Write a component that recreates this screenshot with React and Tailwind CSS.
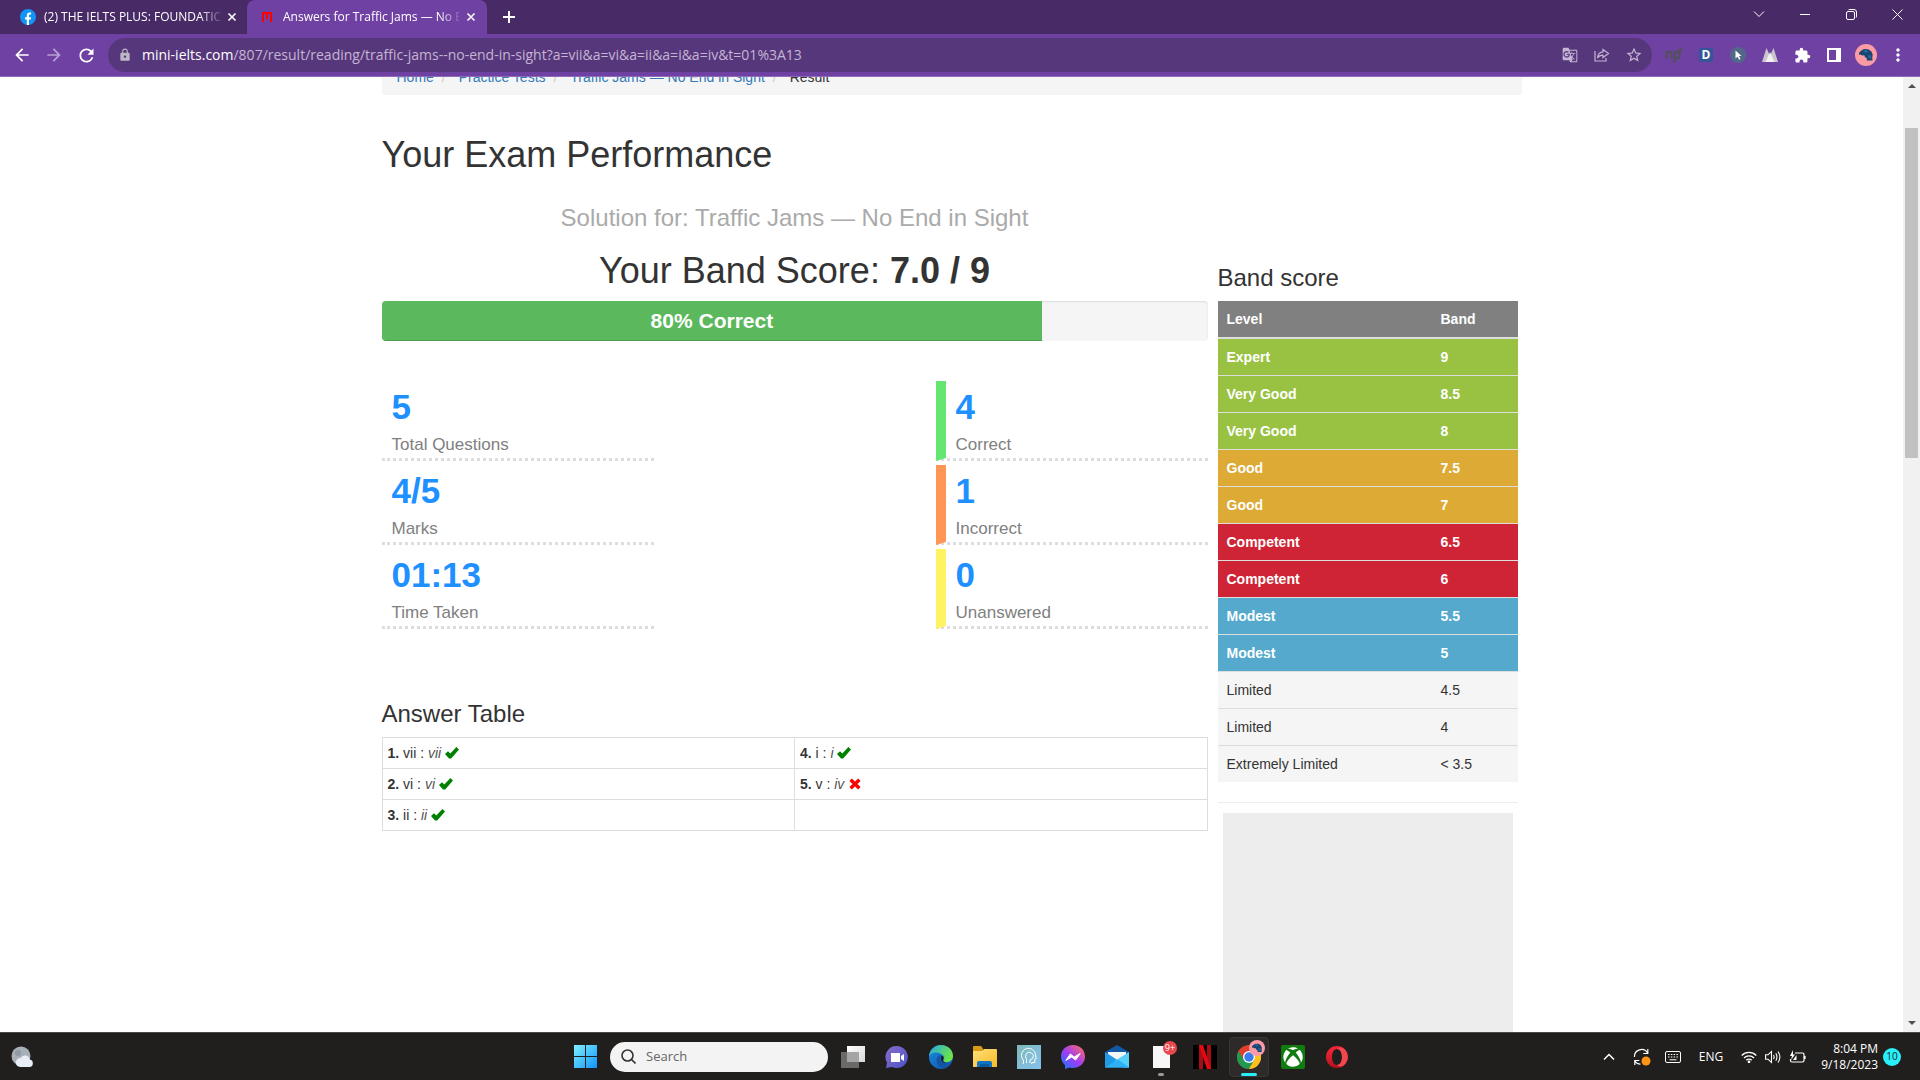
import React from "react";
import {
  MdArrowBack,
  MdArrowForward,
  MdRefresh,
  MdLock,
  MdGTranslate,
  MdStarBorder,
  MdExtension,
  MdMoreVert,
} from "react-icons/md";
import { FaXbox } from "react-icons/fa";

const bands = [
  ["Expert", "9", "bg-[#99c243] font-bold text-white"],
  ["Very Good", "8.5", "bg-[#99c243] font-bold text-white"],
  ["Very Good", "8", "bg-[#99c243] font-bold text-white"],
  ["Good", "7.5", "bg-[#dcaa35] font-bold text-white"],
  ["Good", "7", "bg-[#dcaa35] font-bold text-white"],
  ["Competent", "6.5", "bg-[#cf2435] font-bold text-white"],
  ["Competent", "6", "bg-[#cf2435] font-bold text-white"],
  ["Modest", "5.5", "bg-[#54a9cd] font-bold text-white"],
  ["Modest", "5", "bg-[#54a9cd] font-bold text-white"],
  ["Limited", "4.5", "bg-[#f5f5f5]"],
  ["Limited", "4", "bg-[#f5f5f5]"],
  ["Extremely Limited", "< 3.5", "bg-[#f5f5f5]"],
];

const answers = [
  [
    { n: 1, key: "vii", given: "vii", ok: true },
    { n: 4, key: "i", given: "i", ok: true },
  ],
  [
    { n: 2, key: "vi", given: "vi", ok: true },
    { n: 5, key: "v", given: "iv", ok: false },
  ],
  [{ n: 3, key: "ii", given: "ii", ok: true }, null],
];

function CloseX({ className }) {
  return (
    <svg viewBox="0 0 10 10" className={className} fill="none" stroke="currentColor" strokeWidth="1.6">
      <path d="M1.5 1.5l7 7M8.5 1.5l-7 7" />
    </svg>
  );
}

/* Blue creature used as the profile picture */
function Avatar({ className }) {
  return (
    <svg viewBox="0 0 22 22" className={className}>
      <circle cx="11" cy="11" r="11" fill="#fc9ba5" />
      <path
        d="M4.200 8.500 6.500 6.500 9 5l4 .2 3.200 2 1.500 3.300-.4 3 .2 3h-5.800l.2-2.200-2-1.300-.6-1.800-2.300.2-1.500-1-1.600.4z"
        fill="#17466f"
      />
      <path d="M8 7l3-1 2 1.500-2 1.500zM12.500 12l2.500-1 1.500 2-1 2z" fill="#2a6aa0" />
    </svg>
  );
}

function FacebookIcon() {
  return (
    <svg viewBox="0 0 16 16" className="size-4 shrink-0">
      <circle cx="8" cy="8" r="8" fill="#1194f5" />
      <path
        d="M6.800 16v-5.400H5V8.300h1.800V6.700c0-2 1.100-3.100 2.900-3.100.7 0 1.400.1 1.400.1v1.800h-.9c-.9 0-1.200.5-1.200 1.200v1.600h2.100l-.4 2.300H9V16z"
        fill="#fff"
      />
    </svg>
  );
}

function TabStrip() {
  return (
    <div className="flex h-[34px] shrink-0 items-stretch bg-[#472a66] text-xs text-white">
      <div className="flex w-[247px] items-center pl-5">
        <FacebookIcon />
        <span className="ml-2 w-[176px] overflow-hidden whitespace-nowrap [mask-image:linear-gradient(to_right,black_156px,transparent_180px)]">
          (2) THE IELTS PLUS: FOUNDATION
        </span>
        <button type="button" aria-label="Close tab" className="ml-[7px]">
          <CloseX className="size-2.5" />
        </button>
      </div>
      <div className="flex w-[240px] items-center rounded-t-lg bg-[#6f41a3] pl-[15px]">
        <svg viewBox="0 0 10 10" className="size-2.5 shrink-0" fill="#f00">
          <path d="M0 0h10v10H8V2H6v5H4V2H2v8H0z" />
        </svg>
        <span className="ml-[11px] w-[176px] overflow-hidden whitespace-nowrap [mask-image:linear-gradient(to_right,black_156px,transparent_180px)]">
          Answers for Traffic Jams — No En
        </span>
        <button type="button" aria-label="Close tab" className="ml-[7px]">
          <CloseX className="size-2.5" />
        </button>
      </div>
      <button type="button" aria-label="New tab" className="flex w-11 items-center justify-center">
        <svg viewBox="0 0 12 12" className="size-3" stroke="currentColor" strokeWidth="2">
          <path d="M6 0v12M0 6h12" />
        </svg>
      </button>
      <div className="ml-auto flex h-7 items-center">
        <button type="button" aria-label="Search tabs" className="flex w-[46px] justify-center">
          <svg viewBox="0 0 12 8" className="h-2 w-3" fill="none" stroke="currentColor">
            <path d="M1 1.500l5 5 5-5" />
          </svg>
        </button>
        <button type="button" aria-label="Minimize" className="flex w-[46px] justify-center">
          <span className="h-px w-2.5 bg-white" />
        </button>
        <button type="button" aria-label="Restore" className="flex w-[46px] justify-center">
          <svg viewBox="0 0 11 11" className="size-[11px]" fill="none" stroke="currentColor">
            <rect x=".5" y="2.500" width="8" height="8" rx="1.500" />
            <path d="M2.500.8Q3 .5 4 .5h4q2.500 0 2.500 2.500v4q0 1-.3 1.500" />
          </svg>
        </button>
        <button type="button" aria-label="Close" className="flex w-[46px] justify-center">
          <svg viewBox="0 0 11 11" className="size-[11px]" fill="none" stroke="currentColor">
            <path d="M.5.5l10 10M10.500.5l-10 10" />
          </svg>
        </button>
      </div>
    </div>
  );
}

function ToolButton({ label, children }) {
  return (
    <button type="button" aria-label={label} className="flex size-8 items-center justify-center">
      {children}
    </button>
  );
}

function Toolbar() {
  return (
    <div className="flex h-[43px] shrink-0 items-center border-b border-[#8f6ab8] bg-[#6f41a3] pl-1.5 pr-1.5 text-white">
      <ToolButton label="Back"><MdArrowBack className="size-5" /></ToolButton>
      <ToolButton label="Forward"><MdArrowForward className="size-5 opacity-50" /></ToolButton>
      <ToolButton label="Reload"><MdRefresh className="size-[21px]" /></ToolButton>
      <div className="ml-1.5 flex h-[34px] flex-1 items-center rounded-full bg-[#57377b] pl-2.5 pr-0.5 text-[#c4b5d4]">
        <MdLock className="size-3.5 text-[#bdb6c4]" />
        <div className="ml-2.5 flex-1 text-sm whitespace-nowrap">
          <span className="text-white">mini-ielts.com</span>
          /807/result/reading/traffic-jams--no-end-in-sight?a=vii&amp;a=vi&amp;a=ii&amp;a=i&amp;a=iv&amp;t=01%3A13
        </div>
        <ToolButton label="Translate"><MdGTranslate className="size-4" /></ToolButton>
        <ToolButton label="Share">
          <svg viewBox="0 0 16 14" className="h-3.5 w-4" fill="none" stroke="currentColor" strokeWidth="1.200">
            <path d="M1 3v10h11v-3M9 1.500L14.500 5.500 9 9.500V7.200Q5.500 7 3.500 10 4 4.200 9 3.800z" />
          </svg>
        </ToolButton>
        <ToolButton label="Bookmark"><MdStarBorder className="size-[18px]" /></ToolButton>
      </div>
      <div className="ml-1.5 flex">
        <ToolButton label="np extension">
          <svg viewBox="0 0 18 16" className="h-4 w-[18px]" fill="none" stroke="#544f5c" strokeWidth="2.200">
            <path d="M1.500 12V4M1.500 6.500Q2 4.500 4 4.500T6.500 7v5M9.500 16V4M9.500 8q0-3.500 2.500-3.500T14.500 8 12 11.500 9.500 8" />
            <path d="M15.500 0v6M12.500 3h6" strokeWidth="1.500" />
          </svg>
        </ToolButton>
        <ToolButton label="Dictionary">
          <span className="flex size-3.5 items-center justify-center rounded-xs bg-[#335699] text-xs font-bold">D</span>
        </ToolButton>
        <ToolButton label="Cursor">
          <svg viewBox="0 0 16 16" className="size-4">
            <circle cx="8" cy="8" r="8" fill="#526889" />
            <path d="M5.500 3.500l6 5.500H9l1.500 3-1.400.7-1.500-3-2.100 1.900z" fill="#fff" />
          </svg>
        </ToolButton>
        <ToolButton label="Peaks">
          <svg viewBox="0 0 16 14" className="h-3.5 w-4">
            <path d="M0 14L4.500 0 8 8 11.500 0 16 14z" fill="#c9c6cc" />
            <path d="M3.500 14L8 4l4.500 10z" fill="#f2f0f3" />
          </svg>
        </ToolButton>
        <ToolButton label="Extensions"><MdExtension className="size-[17px]" /></ToolButton>
        <ToolButton label="Side panel">
          <svg viewBox="0 0 14 14" className="size-3.5" fill="#fff">
            <path fillRule="evenodd" d="M0 0h14v14H0zM2 2v10h7V2z" />
          </svg>
        </ToolButton>
        <ToolButton label="Profile"><Avatar className="size-[22px]" /></ToolButton>
        <ToolButton label="Menu"><MdMoreVert className="size-5" /></ToolButton>
      </div>
    </div>
  );
}

function Stat({ value, label, edge = "" }) {
  return (
    <div className={"border-b-[3px] border-dotted border-b-[#ddd] pt-px pl-2.5 " + edge}>
      <div className="text-[35px] leading-[50px] font-bold text-[#1e90ff]">{value}</div>
      <div className="text-[17px] leading-[26px] text-[#808080]">{label}</div>
    </div>
  );
}

function Answer({ item }) {
  if (!item) return null;
  return (
    <>
      <b>{item.n}.</b> {item.key} : <i className="text-[#555]">{item.given}</i>{" "}
      {item.ok ? (
        <svg viewBox="0 0 14 12" className="inline h-3 w-3.5 align-[-1px]" fill="#008000">
          <path d="M0 7l3-2.700 2.300 2.200L11.400 0 14 2.600 6.200 11.500H4z" />
        </svg>
      ) : (
        <svg viewBox="0 0 12 12" className="ml-px inline size-3 align-[-1px]" fill="#f00">
          <path d="M2.800.5L6 3.600 9.200.5 11.600 2.900 8.500 6l3.100 3.100-2.400 2.400L6 8.400 2.800 11.500.4 9.100 3.500 6 .4 2.900z" />
        </svg>
      )}
    </>
  );
}

function BandTable() {
  return (
    <table className="w-full table-fixed border-collapse text-left">
      <colgroup>
        <col />
        <col className="w-[86px]" />
      </colgroup>
      <thead>
        <tr className="bg-[#808080] text-white">
          <th className="px-[9px] py-2">Level</th>
          <th className="px-[9px] py-2">Band</th>
        </tr>
      </thead>
      <tbody>
        {bands.map(([level, band, tone], i) => (
          <tr key={i} className={(i === 0 ? "border-t-2 " : "border-t ") + "border-[#ddd] " + tone}>
            <td className="px-[9px] py-2">{level}</td>
            <td className="px-[9px] py-2">{band}</td>
          </tr>
        ))}
      </tbody>
    </table>
  );
}

function Crumb({ href, children }) {
  return (
    <>
      <a href={href} className="text-[#337ab7]">{children}</a>
      <span className="pl-2 pr-[9px] text-[#ccc]">/&nbsp;</span>
    </>
  );
}

function ResultPage() {
  return (
    <main className="flex-1 overflow-hidden bg-white font-['Liberation_Sans',Arial,sans-serif] text-sm text-[#333]">
      <div className="mx-auto -mt-[18px] max-w-[1140px]">
        <nav className="flex rounded-b bg-[#f5f5f5] px-[15px] py-2" aria-label="Breadcrumb">
          <Crumb href="#home">Home</Crumb>
          <Crumb href="#tests">Practice Tests</Crumb>
          <Crumb href="#jams">Traffic Jams — No End in Sight</Crumb>
          <span>Result</span>
        </nav>
        <h1 className="mt-10 text-4xl leading-10">Your Exam Performance</h1>
        <div className="mt-[30px] flex gap-2.5 pr-1">
          <section className="flex-1">
            <h2 className="text-center text-2xl leading-[26px] text-[#aaa]">
              Solution for: Traffic Jams — No End in Sight
            </h2>
            <h2 className="mt-5 text-center text-4xl leading-10">
              Your Band Score: <b>7.0 / 9</b>
            </h2>
            <div className="mt-2.5 h-10 overflow-hidden rounded bg-[#f5f5f5] shadow-[inset_0_1px_2px_rgba(0,0,0,0.1)]">
              <div className="h-full w-4/5 bg-[#5cb85c] text-center text-[21px] leading-10 font-bold text-white shadow-[inset_0_-1px_0_rgba(0,0,0,0.15)]">
                80% Correct
              </div>
            </div>
            <div className="mt-10 flex justify-between">
              <div className="flex w-[272px] flex-col gap-1">
                <Stat value="5" label="Total Questions" />
                <Stat value="4/5" label="Marks" />
                <Stat value="01:13" label="Time Taken" />
              </div>
              <div className="flex w-[272px] flex-col gap-1">
                <Stat value="4" label="Correct" edge="border-l-[10px] [border-left-style:solid] border-l-[#65e572]" />
                <Stat value="1" label="Incorrect" edge="border-l-[10px] [border-left-style:solid] border-l-[#ff9655]" />
                <Stat value="0" label="Unanswered" edge="border-l-[10px] [border-left-style:solid] border-l-[#fff263]" />
              </div>
            </div>
            <h3 className="mt-[72px] text-2xl leading-[26px]">Answer Table</h3>
            <table className="mt-2.5 w-full table-fixed border-collapse">
              <tbody>
                {answers.map((row, i) => (
                  <tr key={i}>
                    {row.map((item, j) => (
                      <td key={j} className="h-[31px] border border-[#ddd] px-[5px] align-middle">
                        <Answer item={item} />
                      </td>
                    ))}
                  </tr>
                ))}
              </tbody>
            </table>
          </section>
          <aside className="w-[300px] shrink-0 pt-[60px]">
            <h3 className="mb-2.5 text-2xl leading-[26px]">Band score</h3>
            <BandTable />
            <hr className="mt-5 mb-2.5 border-[#eee]" />
            <div className="mx-[5px] h-[600px] bg-[#ededed]" />
          </aside>
        </div>
      </div>
    </main>
  );
}

function Scrollbar() {
  return (
    <div className="flex w-[17px] shrink-0 flex-col items-center bg-[#f1f1f1] py-[7px]">
      <span className="border-x-4 border-b-4 border-x-transparent border-b-[#505050]" />
      <span className="mt-10 h-[330px] w-[13px] bg-[#c1c1c1]" />
      <span className="mt-auto border-x-4 border-t-4 border-x-transparent border-t-[#505050]" />
    </div>
  );
}

function AppButton({ label, children }) {
  return (
    <button type="button" aria-label={label} className="relative flex size-6 items-center justify-center">
      {children}
    </button>
  );
}

function Gradient({ id, from, to, x2 = "1", y2 = "1" }) {
  return (
    <linearGradient id={id} x1="0" y1="0" x2={x2} y2={y2}>
      <stop offset="0" stopColor={from} />
      <stop offset="1" stopColor={to} />
    </linearGradient>
  );
}

function Taskbar() {
  return (
    <footer className="grid h-12 shrink-0 grid-cols-[1fr_auto_1fr] items-center border-t border-[#484848] bg-[#211f1e] text-white">
      <button type="button" aria-label="Weather" className="ml-2.5 w-fit">
        <svg viewBox="0 0 24 22" className="h-[22px] w-6">
          <circle cx="11" cy="10" r="9.500" fill="#a7afb7" />
          <circle cx="8" cy="7" r="3" fill="#8f99a3" />
          <path d="M10 21a4.500 4.500 0 0 1 .5-9 5 5 0 0 1 9.300 1.500A3.800 3.800 0 0 1 19.500 21z" fill="#e8eef5" />
        </svg>
      </button>

      <div className="flex items-center gap-5 pl-0.5">
        <AppButton label="Start">
          <svg viewBox="0 0 23 23" className="size-[23px]">
            <defs><Gradient id="win" from="#80f2ff" to="#0f93fb" /></defs>
            <path d="M0 0h11v11H0zM12 0h11v11H12zM0 12h11v11H0zM12 12h11v11H12z" fill="url(#win)" />
          </svg>
        </AppButton>
        <label className="-mr-[7px] -ml-[7px] flex h-[30px] w-[218px] items-center rounded-full bg-[#f3f3f3] pl-[11px]">
          <svg viewBox="0 0 15 15" className="size-[15px]" fill="none" stroke="#333" strokeWidth="1.600">
            <circle cx="6.500" cy="6.500" r="5.500" />
            <path d="M10.500 10.500l4 4" />
          </svg>
          <input
            aria-label="Search"
            placeholder="Search"
            className="ml-2.5 w-40 bg-transparent text-[13px] text-[#333] outline-none placeholder:text-[#666]"
          />
        </label>
        <AppButton label="Task view">
          <svg viewBox="0 0 24 22" className="h-[22px] w-6">
            <defs><Gradient id="tv" from="#fff" to="#d8d8d8" /></defs>
            <path d="M6 0h18v16H6z" fill="url(#tv)" />
            <path d="M0 6h18v16H0z" fill="#6a6a6a" />
            <path d="M6 6h12v10H6z" fill="#a5a5a5" />
          </svg>
        </AppButton>
        <AppButton label="Chat">
          <svg viewBox="0 0 24 24" className="size-6">
            <defs><Gradient id="chat" from="#8b6cc8" to="#4a55cc" /></defs>
            <path d="M12 1a11 11 0 1 1-5 20.900L1 23l1-5.500A11 11 0 0 1 12 1z" fill="url(#chat)" />
            <path d="M6 8h9v9H6zM16 11l3-2v7l-3-2z" fill="#fff" />
          </svg>
        </AppButton>
        <AppButton label="Edge">
          <svg viewBox="0 0 24 24" className="size-6">
            <defs>
              <Gradient id="edgeTop" from="#23a8e8" to="#6be24a" y2="0.4" />
              <Gradient id="edgeLow" from="#1b8fdf" to="#0c4fa8" />
            </defs>
            <circle cx="12" cy="12" r="12" fill="url(#edgeLow)" />
            <path d="M0 11.500C.5 4.500 6 0 12 0c7 0 12 5 12 11 0 4-3 6.200-6.200 6.200-2.800 0-4-1.200-3.300-2.200 1-1.200 1-3-.3-4.500C10 6 2.500 6.500 0 11.500z" fill="url(#edgeTop)" />
            <path d="M10 10.500c-3.200 2-3.500 8 1.500 11.500 3.500 2 8 .5 10.500-3.500-5 2.300-10.500 0-11-4-.1-1.800.4-3 .5-4z" fill="#1553a5" />
            <path d="M12.500 10.500c2 .5 2.500 2.800 1.500 4.500-.5 1.500 1.500 3 4 3-4.500 1.500-7.500-3.500-5.500-7.500z" fill="#211f1e" />
          </svg>
        </AppButton>
        <AppButton label="File Explorer">
          <svg viewBox="0 0 24 22" className="h-[22px] w-6">
            <defs><Gradient id="fold" from="#ffe07a" to="#f7b928" /></defs>
            <path d="M0 1q0-1 1-1h7l2 2.500V6H0z" fill="#d99a14" />
            <path d="M0 5h9l2-2h12q1 0 1 1v17H0z" fill="url(#fold)" />
            <path d="M4 21v-4q0-2 2-2h11q2 0 2 2v4z" fill="#1272c4" />
            <path d="M7 18h9v3H7z" fill="#0d5a9f" />
          </svg>
        </AppButton>
        <AppButton label="Mind app">
          <svg viewBox="0 0 24 24" className="size-6" fill="none" stroke="#fff">
            <defs><Gradient id="mind" from="#7fb9b8" to="#85c0ee" /></defs>
            <path d="M0 0h24v24H0z" fill="url(#mind)" stroke="none" />
            <path d="M6 19q1-2 .3-4A7 7 0 1 1 18.500 10l.8 3.500-1.500.5v3.500h-3V19" />
            <path d="M9.500 18v-3.500Q7.500 11 9.500 8.500T14.500 8t1.500 5l-3 2v3" />
          </svg>
        </AppButton>
        <AppButton label="Messenger">
          <svg viewBox="0 0 24 24" className="size-6">
            <defs>
              <linearGradient id="msg" x1="0" y1="1" x2=".9" y2="0">
                <stop offset="0" stopColor="#0a7cff" />
                <stop offset=".5" stopColor="#a03cf5" />
                <stop offset="1" stopColor="#ff6a68" />
              </linearGradient>
            </defs>
            <path d="M12 0c7 0 12 5 12 11.600S19 23 12 23q-2 0-3.500-.5L4 24v-3.700C1.500 18 0 15 0 11.600 0 5 5 0 12 0z" fill="url(#msg)" />
            <path d="M4.800 15.500l4.500-6.500 4 3 5.900-3.500-4.500 6.500-4-3z" fill="#fff" stroke="#fff" strokeLinejoin="round" />
          </svg>
        </AppButton>
        <AppButton label="Mail">
          <svg viewBox="0 0 24 23" className="h-[23px] w-6">
            <path d="M0 7l12-7 12 7v6H0z" fill="#1259a5" />
            <path d="M3 7h18v10H3z" fill="#f4f6f8" />
            <path d="M0 7l24 15.500H0z" fill="#2099e6" />
            <path d="M24 7L9 16.500l9 6h6z" fill="#54d0fa" />
            <path d="M0 22.500l13-8 11 8z" fill="#2eb1f2" />
          </svg>
        </AppButton>
        <AppButton label="Notes, 9+ new">
          <span className="h-[22px] w-[17px] bg-[#f7f7f7]" />
          <span className="absolute -top-1 -right-1 flex h-3.5 w-3.5 items-center justify-center rounded-full bg-[#e8484d] text-[9px]">9+</span>
          <span className="absolute -bottom-[7px] h-[3px] w-1.5 rounded-full bg-[#999]" />
        </AppButton>
        <AppButton label="Netflix">
          <svg viewBox="0 0 24 24" className="size-6">
            <path d="M0 0h24v24H0z" fill="#000" />
            <path d="M6 0h4v24H6zM14 0h4v24h-4z" fill="#a80c14" />
            <path d="M6 0h4l8 24h-4z" fill="#e50914" />
          </svg>
        </AppButton>
        <AppButton label="Chrome">
          <span className="absolute -inset-2 rounded border border-[#393636] bg-[#2d2a29]" />
          <svg viewBox="0 0 24 24" className="relative size-6">
            <circle cx="12" cy="12" r="12" fill="#e2402f" />
            <path d="M1.600 6A12 12 0 0 0 12 24l5.200-9L12 12 6.800 15z" fill="#1f9a50" />
            <path d="M12 24A12 12 0 0 0 22.400 6H12v6l5.200 3z" fill="#fcc31e" />
            <circle cx="12" cy="12" r="6" fill="#fff" />
            <circle cx="12" cy="12" r="4.700" fill="#3a7df0" />
          </svg>
          <Avatar className="absolute -top-[5px] -right-1 size-4" />
          <span className="absolute -bottom-[7px] h-[3px] w-4 rounded-full bg-[#26eef9]" />
        </AppButton>
        <AppButton label="Xbox">
          <span className="flex size-6 items-center justify-center rounded-xs bg-[#107c10]">
            <FaXbox className="size-5" />
          </span>
        </AppButton>
        <AppButton label="Opera">
          <svg viewBox="0 0 24 24" className="size-6">
            <defs><Gradient id="op" from="#ff2b3c" to="#b50f1c" x2="0.3" /></defs>
            <path
              fillRule="evenodd"
              d="M12 1a11 11 0 1 1 0 22 11 11 0 0 1 0-22zM12 4c-3 0-5 3.600-5 8s2 8 5 8 5-3.600 5-8-2-8-5-8z"
              fill="url(#op)"
            />
            <path d="M12 4c1.500-1.800 4.500-2.200 7-.2 5 4.500 5 12 0 16.400-2.500 2-5.500 1.600-7-.2 3 0 5-3.600 5-8s-2-8-5-8z" fill="#f0484e" />
          </svg>
        </AppButton>
      </div>

      <div className="flex items-center justify-end pr-[19px] text-xs">
        <button type="button" aria-label="Hidden icons">
          <svg viewBox="0 0 12 8" className="h-2 w-3" fill="none" stroke="currentColor" strokeWidth="1.500">
            <path d="M1 6.500l5-5 5 5" />
          </svg>
        </button>
        <svg viewBox="0 0 18 18" className="ml-[18px] size-[18px]" fill="none" stroke="currentColor" strokeWidth="1.200">
          <path d="M1.500 9A7 7 0 0 1 14.500 5M14.800 1v4.500h-4.500M1.800 17v-4.500h4.500M1.800 12.500Q3.500 16 7.500 16.200" />
          <circle cx="13" cy="13" r="4.500" fill="#ff9416" stroke="none" />
        </svg>
        <svg viewBox="0 0 16 12" className="ml-3.5 h-3 w-4" fill="none" stroke="currentColor">
          <rect x=".5" y=".5" width="15" height="11" rx="1.500" />
          <path d="M3 3.500h10M3 6h10" strokeDasharray="1.500 1.300" />
          <path d="M4.500 8.800h7" />
        </svg>
        <span className="ml-[18px]">ENG</span>
        <svg viewBox="0 0 16 12" className="ml-[18px] h-3 w-4" fill="none" stroke="currentColor" strokeWidth="1.300">
          <path d="M.7 4.500a10.300 10.300 0 0 1 14.600 0M3 7a7 7 0 0 1 10 0M5.300 9.300a3.800 3.800 0 0 1 5.400 0" />
          <circle cx="8" cy="10.800" r=".7" fill="currentColor" />
        </svg>
        <svg viewBox="0 0 16 14" className="ml-2 h-3.5 w-4" fill="none" stroke="currentColor" strokeWidth="1.100">
          <path d="M.6 4.800H3L6.500 1.500v11L3 9.200H.6zM8.500 5q1.300 2 0 4M10.800 3.300q2.300 3.700 0 7.400M13 1.500q3.800 5.500 0 11" />
        </svg>
        <svg viewBox="0 0 17 14" className="ml-2 h-3.5 w-[17px]" fill="none" stroke="currentColor" strokeWidth="1.200">
          <path d="M6 3h7.500Q15 3 15 4.500v6Q15 12 13.500 12H3q-1.500 0-1.500-1.500V9M16 6v3" />
          <path d="M4 0L1 6h2L2 10l4-5.500H4z" fill="currentColor" stroke="none" />
          <path d="M4 10l3.500-5v5z" fill="currentColor" stroke="none" />
        </svg>
        <div className="ml-[15px] text-right leading-4">
          <div>8:04 PM</div>
          <div>9/18/2023</div>
        </div>
        <span className="ml-[5px] flex size-[18px] items-center justify-center rounded-full bg-[#27f0fa] text-[10px] text-[#222]">
          10
        </span>
      </div>
    </footer>
  );
}

export default function App() {
  return (
    <div className="flex h-screen flex-col overflow-hidden font-['Open_Sans','Noto_Sans',sans-serif]">
      <TabStrip />
      <Toolbar />
      <div className="flex min-h-0 flex-1 bg-white">
        <ResultPage />
        <Scrollbar />
      </div>
      <Taskbar />
    </div>
  );
}
